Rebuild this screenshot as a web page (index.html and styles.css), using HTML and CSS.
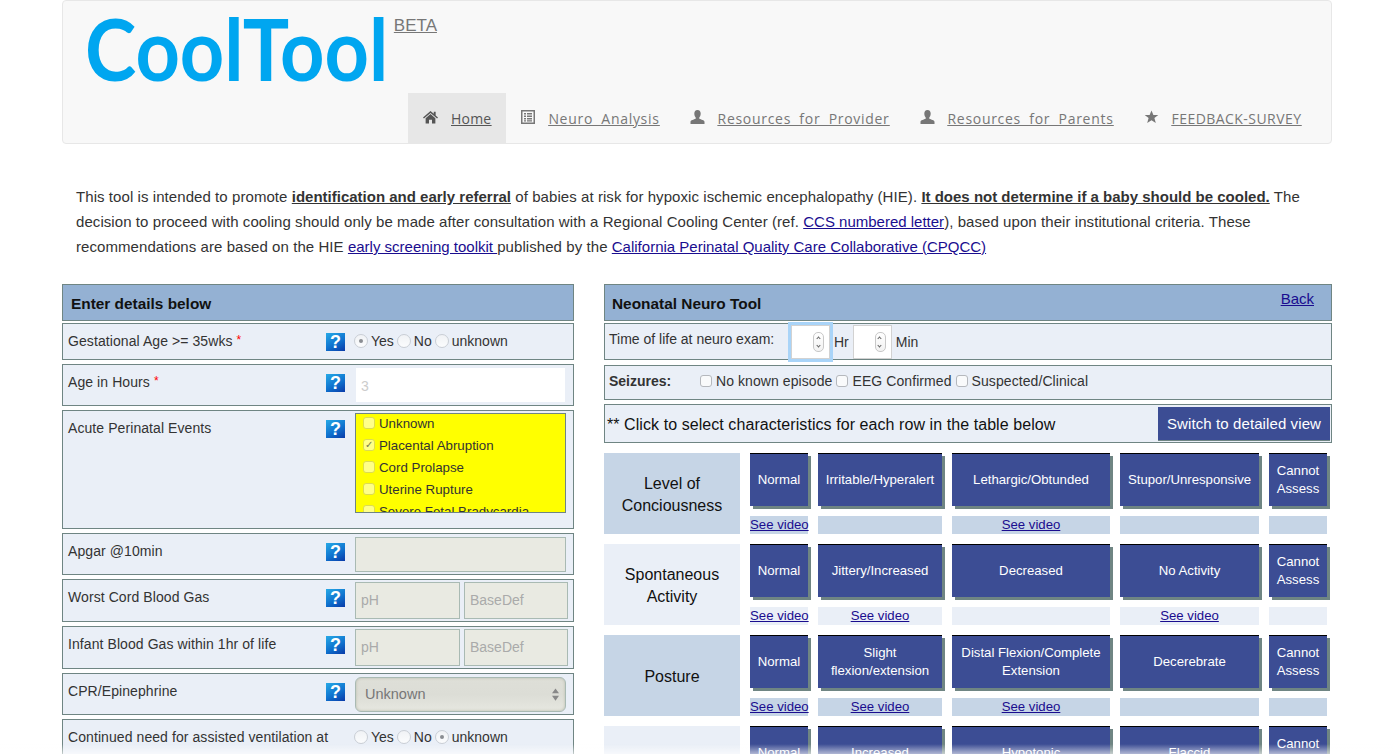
FILE: index.html
```html
<!DOCTYPE html>
<html lang="en">

<head>
    <meta charset="UTF-8">
    <meta name="viewport" content="width=device-width, initial-scale=1.0">
    <title>CoolTool</title>
    <link rel="stylesheet" href="styles.css">
</head>

<body>
    <div class="page">
        <header class="navbar">
            <div class="brand">
                <a class="logo">CoolTool</a>
                <a class="beta" href="#">BETA</a>
            </div>
            <nav class="nav">
                <a class="nav-item active" href="#">
                    <svg class="nav-icon wide" viewBox="0 0 16 14"><path d="M8 0.5 L11.5 3.6 V1.5 H13.5 V5.4 L16 7.6 L15 8.7 L8 2.6 L1 8.7 L0 7.6 Z M2.8 8.4 L8 3.9 L13.2 8.4 V14 H9.6 V9.8 H6.4 V14 H2.8 Z"/></svg>
                    <span>Home</span>
                </a>
                <a class="nav-item" href="#">
                    <svg class="nav-icon" viewBox="0 0 14 14"><path fill-rule="evenodd" d="M0 0 H14 V14 H0 Z M1.5 1.5 V12.5 H12.5 V1.5 Z M3 3 H5 V4.5 H3 Z M6 3 H11 V4.5 H6 Z M3 5.6 H5 V7 H3 Z M6 5.6 H11 V7 H6 Z M3 8 H5 V9.4 H3 Z M6 8 H11 V9.4 H6 Z M3 10.2 H5 V11.4 H3 Z M6 10.2 H11 V11.4 H6 Z"/></svg>
                    <span>Neuro Analysis</span>
                </a>
                <a class="nav-item" href="#">
                    <svg class="nav-icon wide" viewBox="0 0 14 14"><path d="M7 0 C9.2 0 10.2 1.6 10.2 3.6 C10.2 5.4 9.5 6.8 8.8 7.6 V8.8 C10.6 9.6 14 10.2 14 12 V14 H0 V12 C0 10.2 3.4 9.6 5.2 8.8 V7.6 C4.5 6.8 3.8 5.4 3.8 3.6 C3.8 1.6 4.8 0 7 0 Z"/></svg>
                    <span>Resources for Provider</span>
                </a>
                <a class="nav-item" href="#">
                    <svg class="nav-icon wide" viewBox="0 0 14 14"><path d="M7 0 C9.2 0 10.2 1.6 10.2 3.6 C10.2 5.4 9.5 6.8 8.8 7.6 V8.8 C10.6 9.6 14 10.2 14 12 V14 H0 V12 C0 10.2 3.4 9.6 5.2 8.8 V7.6 C4.5 6.8 3.8 5.4 3.8 3.6 C3.8 1.6 4.8 0 7 0 Z"/></svg>
                    <span>Resources for Parents</span>
                </a>
                <a class="nav-item" href="#">
                    <svg class="nav-icon wide" viewBox="0 0 14 14"><path d="M7 0.5 L8.9 5 H13.8 L9.9 8.1 L11.3 13 L7 10.2 L2.7 13 L4.1 8.1 L0.2 5 H5.1 Z"/></svg>
                    <span>FEEDBACK-SURVEY</span>
                </a>
            </nav>
        </header>

        <p class="intro">This tool is intended to promote <a class="strong-link"><b>identification and early referral</b></a> of babies at risk for hypoxic ischemic encephalopathy (HIE). <a class="strong-link"><b>It does not determine if a baby should be cooled.</b></a> The decision to proceed with cooling should only be made after consultation with a Regional Cooling Center (ref. <a href="#">CCS numbered letter</a>), based upon their institutional criteria. These recommendations are based on the HIE <a href="#">early screening toolkit </a>published by the <a href="#">California Perinatal Quality Care Collaborative (CPQCC)</a></p>

        <div class="columns">
            <section class="col-left">
                <div class="panel-head">Enter details below</div>

                <div class="row row-radio">
                    <div class="row-label">Gestational Age &gt;= 35wks <span class="req">*</span></div>
                    <span class="help">?</span>
                    <div class="radios">
                        <span class="radio checked"></span>Yes<span class="radio"></span>No<span class="radio"></span>unknown
                    </div>
                </div>

                <div class="row">
                    <div class="row-label">Age in Hours <span class="req">*</span></div>
                    <span class="help">?</span>
                    <input class="age-input" type="text" value="3" disabled>
                </div>

                <div class="row row-list">
                    <div class="row-label">Acute Perinatal Events</div>
                    <span class="help">?</span>
                    <div class="event-list">
                        <label><input type="checkbox" disabled>Unknown</label>
                        <label><input type="checkbox" checked disabled>Placental Abruption</label>
                        <label><input type="checkbox" disabled>Cord Prolapse</label>
                        <label><input type="checkbox" disabled>Uterine Rupture</label>
                        <label><input type="checkbox" disabled>Severe Fetal Bradycardia</label>
                    </div>
                </div>

                <div class="row">
                    <div class="row-label">Apgar @10min</div>
                    <span class="help">?</span>
                    <input class="field field-wide" type="text" disabled>
                </div>

                <div class="row row-pair">
                    <div class="row-label">Worst Cord Blood Gas</div>
                    <span class="help">?</span>
                    <div class="pair">
                        <input class="field" type="text" placeholder="pH" disabled>
                        <input class="field" type="text" placeholder="BaseDef" disabled>
                    </div>
                </div>

                <div class="row row-pair">
                    <div class="row-label">Infant Blood Gas within 1hr of life</div>
                    <span class="help">?</span>
                    <div class="pair">
                        <input class="field" type="text" placeholder="pH" disabled>
                        <input class="field" type="text" placeholder="BaseDef" disabled>
                    </div>
                </div>

                <div class="row">
                    <div class="row-label">CPR/Epinephrine</div>
                    <span class="help">?</span>
                    <div class="select-wrap">
                        <select class="select" disabled>
                            <option>Unknown</option>
                        </select>
                        <svg class="select-arrows" viewBox="0 0 8 14"><path d="M4 0 L8 5.5 H0 Z M4 14 L0 8.5 H8 Z"/></svg>
                    </div>
                </div>

                <div class="row row-radio">
                    <div class="row-label">Continued need for assisted ventilation at</div>
                    <span class="help-gap"></span>
                    <div class="radios">
                        <span class="radio"></span>Yes<span class="radio"></span>No<span class="radio checked"></span>unknown
                    </div>
                </div>
            </section>

            <section class="col-right">
                <div class="panel-head">
                    <span>Neonatal Neuro Tool</span>
                    <a class="back" href="#">Back</a>
                </div>

                <div class="tool-row time-row">
                    <span class="time-label">Time of life at neuro exam:</span>
                    <div class="spin focus"><span class="spin-pill"></span></div>
                    <span>Hr</span>
                    <div class="spin"><span class="spin-pill"></span></div>
                    <span>Min</span>
                </div>

                <div class="tool-row seizure-row">
                    <b class="seizure-title">Seizures:</b>
                    <span class="tick"></span>No known episode
                    <span class="tick"></span>EEG Confirmed
                    <span class="tick"></span>Suspected/Clinical
                </div>

                <div class="tool-row click-row">
                    <span>** Click to select characteristics for each row in the table below</span>
                    <button class="switch-btn">Switch to detailed view</button>
                </div>

                <div class="matrix">
                    <div class="m-label shade">Level of<br>Conciousness</div>
                    <button class="m-btn">Normal</button>
                    <button class="m-btn">Irritable/Hyperalert</button>
                    <button class="m-btn">Lethargic/Obtunded</button>
                    <button class="m-btn">Stupor/Unresponsive</button>
                    <button class="m-btn">Cannot Assess</button>
                    <div class="m-video shade"><a href="#">See video</a></div>
                    <div class="m-video shade"></div>
                    <div class="m-video shade"><a href="#">See video</a></div>
                    <div class="m-video shade"></div>
                    <div class="m-video shade"></div>

                    <div class="m-label pale">Spontaneous<br>Activity</div>
                    <button class="m-btn">Normal</button>
                    <button class="m-btn">Jittery/Increased</button>
                    <button class="m-btn">Decreased</button>
                    <button class="m-btn">No Activity</button>
                    <button class="m-btn">Cannot Assess</button>
                    <div class="m-video pale"><a href="#">See video</a></div>
                    <div class="m-video pale"><a href="#">See video</a></div>
                    <div class="m-video pale"></div>
                    <div class="m-video pale"><a href="#">See video</a></div>
                    <div class="m-video pale"></div>

                    <div class="m-label shade">Posture</div>
                    <button class="m-btn">Normal</button>
                    <button class="m-btn">Slight flexion/extension</button>
                    <button class="m-btn">Distal Flexion/Complete Extension</button>
                    <button class="m-btn">Decerebrate</button>
                    <button class="m-btn">Cannot Assess</button>
                    <div class="m-video shade"><a href="#">See video</a></div>
                    <div class="m-video shade"><a href="#">See video</a></div>
                    <div class="m-video shade"><a href="#">See video</a></div>
                    <div class="m-video shade"></div>
                    <div class="m-video shade"></div>

                    <div class="m-label pale"></div>
                    <button class="m-btn">Normal</button>
                    <button class="m-btn">Increased</button>
                    <button class="m-btn">Hypotonic</button>
                    <button class="m-btn">Flaccid</button>
                    <button class="m-btn">Cannot Assess</button>
                </div>
            </section>
        </div>
    </div>
    <div class="bottom-fade"></div>
</body>

</html>
```

FILE: styles.css
```css
html,
body {
    height: 100%;
    overflow: hidden;
}

body {
    margin: 0;
    background-color: white;
    font-family: "Liberation Sans", Arial, sans-serif;
    font-size: 14px;
    color: #333;
}

a {
    color: #1a0d8f;
    text-decoration: underline;
}

.page {
    margin: 0 61px 0 62px;
}

/* top bar */
.navbar {
    height: 142px;
    background-color: #f8f8f8;
    border: 1px solid #e7e7e7;
    border-radius: 4px;
}

.brand {
    display: flex;
    align-items: flex-start;
    height: 92px;
    padding-left: 22px;
}

.logo {
    display: block;
    height: 82px;
    margin-right: -33px;
    overflow: hidden;
    font-family: Lato, sans-serif;
    font-weight: 700;
    font-size: 86px;
    line-height: 94px;
    color: #00a6f0;
    text-decoration: none;
    transform: scaleX(0.9);
    transform-origin: left top;
}

.beta {
    margin: 16px 0 0 5px;
    font-size: 17px;
    line-height: 18px;
    color: #777;
}

.nav {
    display: flex;
    height: 50px;
    margin-left: 345px;
}

.nav-item {
    display: flex;
    align-items: center;
    gap: 13px;
    padding: 0 15px;
    font-family: "Open Sans", sans-serif;
    font-size: 14px;
    letter-spacing: 0.7px;
    word-spacing: 4px;
    color: #777;
}

.nav-item.active {
    background-color: #e7e7e7;
    color: #555;
}

.nav-item.active span {
    letter-spacing: 0.2px;
}

.nav-item:last-child span {
    letter-spacing: 0.45px;
}

.nav-icon {
    width: 14px;
    height: 14px;
    margin-top: -3px;
    fill: #777;
}

.nav-icon.wide {
    width: 15px;
}

.nav-item.active .nav-icon {
    fill: #555;
}

.nav-item span {
    text-decoration: underline;
    white-space: nowrap;
}

/* intro paragraph */
.intro {
    margin: 40px 0 25px;
    padding: 0 14px;
    font-size: 15px;
    line-height: 25px;
    letter-spacing: 0.07px;
    color: #333;
}

.intro b {
    letter-spacing: 0;
}

.intro a {
    letter-spacing: 0;
}

.strong-link {
    color: #333;
}

.columns {
    display: flex;
    gap: 30px;
    align-items: flex-start;
}

.col-left {
    width: 512px;
    display: flex;
    flex-direction: column;
    gap: 4px;
}

.col-right {
    width: 728px;
}

.panel-head {
    display: flex;
    justify-content: space-between;
    height: 35px;
    margin-bottom: 2px;
    padding: 0 17px 0 7px;
    background-color: #94b1d3;
    border: 1px solid #6f8583;
    font-size: 15.4px;
    font-weight: bold;
    line-height: 37px;
    color: #111;
}

.col-left .panel-head {
    margin-bottom: -2px;
    padding-left: 8px;
}

.back {
    font-size: 15px;
    font-weight: normal;
    line-height: 28px;
}

/* form rows on the left */
.row {
    display: grid;
    grid-template-columns: 258px 29px 1fr;
    align-items: start;
    height: 34px;
    padding: 3px 4px 3px 5px;
    background-color: #eaeff7;
    border: 1px solid #6f8583;
    letter-spacing: 0.08px;
}

.row-label {
    margin-top: 5px;
    line-height: 18px;
    white-space: nowrap;
}

.row-radio:nth-child(2) .row-label,
.row:nth-child(3) .row-label {
    margin-top: 4px;
}

.req {
    color: red;
    font-size: 12px;
    vertical-align: 2px;
}

.help {
    display: block;
    width: 19px;
    height: 18px;
    margin-top: 6px;
    background: linear-gradient(150deg, #27a9e6 0%, #0f73cf 55%, #0a3aa8 100%);
    font-size: 18px;
    font-weight: bold;
    line-height: 18px;
    text-align: center;
    color: white;
}

.row-radio {
    height: 29px;
}

.radios {
    display: flex;
    align-items: center;
    height: 28px;
    margin-left: -1px;
    font-size: 14px;
    letter-spacing: 0;
    white-space: nowrap;
}

.radio {
    box-sizing: border-box;
    display: inline-block;
    position: relative;
    width: 14px;
    height: 14px;
    margin-right: 3px;
    border: 1px solid #c9ced5;
    border-radius: 50%;
    background: linear-gradient(#f0f2f5, #fbfcfd);
}

.radios .radio:not(:first-child) {
    margin-left: 3px;
}

.radio.checked::after {
    content: "";
    position: absolute;
    top: 4px;
    left: 4px;
    width: 4px;
    height: 4px;
    border-radius: 50%;
    background-color: #8a8d92;
}

.age-input {
    box-sizing: border-box;
    width: 209px;
    height: 34px;
    margin-left: 1px;
    padding: 2px 5px 0;
    border: none;
    background-color: white;
    font: 14px "Liberation Sans", Arial, sans-serif;
    color: #ccc;
}

.row-list {
    height: 111px;
}

.event-list {
    box-sizing: border-box;
    width: 211px;
    height: 100px;
    margin-top: -1px;
    overflow: hidden;
    background-color: #ffff00;
    border: 1px solid #6f8583;
    padding: 0 7px;
}

.event-list label {
    display: flex;
    align-items: center;
    gap: 4px;
    height: 22px;
    position: relative;
    top: -2px;
    white-space: nowrap;
    font-size: 13.3px;
    letter-spacing: 0;
}

.event-list input {
    appearance: none;
    position: relative;
    flex: none;
    width: 12px;
    height: 12px;
    margin: 0;
    border: 1px solid #dcdc50;
    border-radius: 3px;
    background-color: #ffff88;
}

.event-list input:checked::after {
    content: "✓";
    position: absolute;
    top: -2px;
    left: 1px;
    font-family: "DejaVu Sans", sans-serif;
    font-size: 10px;
    line-height: 14px;
    color: #77774a;
}

.field {
    box-sizing: border-box;
    width: 100%;
    min-width: 0;
    height: 37px;
    padding: 0 5px 2px;
    border: 1px solid #a9bab3;
    background-color: #e9eae2;
    font: 14px "Liberation Sans", Arial, sans-serif;
}

.field::placeholder {
    color: #aaa;
}

.field-wide {
    width: 211px;
    height: 35px;
}

.row-pair {
    height: 35px;
}

.pair {
    display: grid;
    grid-template-columns: 105px 104px;
    gap: 4px;
    margin-top: -1px;
}

.select-wrap {
    position: relative;
    width: 211px;
}

.select {
    appearance: none;
    display: block;
    width: 100%;
    height: 35px;
    padding: 0 9px 2px;
    border: 1px solid #a9bab3;
    border-radius: 6px;
    background: linear-gradient(#dedfd8, #dcddd6 50%, #e6e7e0);
    box-shadow: inset 0 0 3px #b9baa9;
    font: 14.5px "Liberation Sans", Arial, sans-serif;
    opacity: 1;
    color: #777;
}

.select-arrows {
    position: absolute;
    top: 11px;
    right: 7px;
    width: 7px;
    height: 13px;
    fill: #888;
}

/* right column */
.tool-row {
    display: flex;
    align-items: center;
    background-color: #eaeff7;
    border: 1px solid #6f8583;
    margin-bottom: 4px;
}

.time-row {
    gap: 4px;
    height: 35px;
    padding-left: 4px;
    margin-bottom: 5px;
}

.time-label {
    width: 178px;
    margin-top: -5px;
}

.spin {
    box-sizing: border-box;
    display: flex;
    justify-content: flex-end;
    align-items: center;
    width: 39px;
    height: 34px;
    padding-right: 5px;
    background-color: white;
    border: 1px solid #d2d2d2;
}

.spin.focus {
    box-shadow: 0 0 0 3px #a9d4f8;
}

.spin-pill {
    width: 9px;
    height: 18px;
    border: 1px solid #c8c8c8;
    border-radius: 5px;
    background: linear-gradient(#fff, #f2f2f2);
    position: relative;
}

.spin-pill::before,
.spin-pill::after {
    content: "";
    position: absolute;
    left: 2.5px;
    width: 3px;
    height: 3px;
    border-left: 1px solid #666;
    border-top: 1px solid #666;
    box-sizing: border-box;
    transform: rotate(45deg);
}

.spin-pill::before {
    top: 4px;
}

.spin-pill::after {
    bottom: 4px;
    transform: rotate(225deg);
}

.seizure-row {
    height: 29px;
    padding: 0 0 4px 4px;
    letter-spacing: 0.08px;
}

.seizure-title {
    width: 91px;
    letter-spacing: 0;
}

.tick {
    box-sizing: border-box;
    width: 12px;
    height: 12px;
    margin: 0 4px 0 0;
    border: 1px solid #b5b8bd;
    border-radius: 3px;
    background-color: #f9fafb;
}

.tick ~ .tick {
    margin-left: 4px;
}

.click-row {
    justify-content: space-between;
    height: 37px;
    padding: 0 1px 0 2px;
    margin-bottom: 10px;
    font-size: 16px;
    letter-spacing: 0.07px;
    color: #111;
}

.click-row span {
    padding-top: 2px;
}

.switch-btn {
    width: 172px;
    height: 34px;
    margin-top: 1px;
    padding: 0;
    border: none;
    border-bottom: 1px solid #6f8583;
    background-color: #3c4d94;
    font: 15px "Liberation Sans", Arial, sans-serif;
    letter-spacing: 0.1px;
    color: white;
}

/* neuro table */
.matrix {
    display: grid;
    grid-template-columns: 136px 58px 124px 158px 139px 58px;
    grid-template-rows: repeat(4, 53px 18px);
    column-gap: 10px;
    row-gap: 10px;
}

.m-label {
    grid-row: span 2;
    display: flex;
    align-items: center;
    justify-content: center;
    padding-top: 3px;
    font-size: 16px;
    line-height: 22px;
    text-align: center;
    color: #111;
}

.shade {
    background-color: #c6d5e6;
}

.pale {
    background-color: #eaeff7;
}

.m-btn {
    padding: 0 4px;
    border: none;
    border-top: 1px solid #000;
    background-color: #3c4d94;
    box-shadow: 3px 3px 0 #6f8583;
    font: 13.2px/18px "Liberation Sans", Arial, sans-serif;
    color: white;
}

.m-video {
    font-size: 13.2px;
    line-height: 18px;
    text-align: center;
    white-space: nowrap;
}

.bottom-fade {
    position: fixed;
    left: 0;
    right: 0;
    bottom: 0;
    height: 10px;
    background: linear-gradient(rgba(255, 255, 255, 0), rgba(255, 255, 255, 0.6));
}
```
